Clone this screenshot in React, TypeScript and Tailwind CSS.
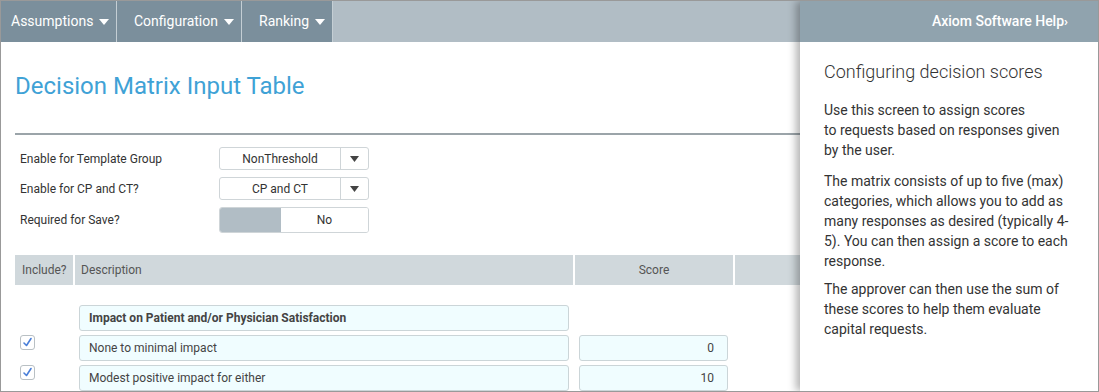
import React from 'react';

const navItems = [
  { label: 'Assumptions', cls: 'w-[116px] pl-[10px]' },
  { label: 'Configuration', cls: 'w-[125px] pl-[17px]' },
  { label: 'Ranking', cls: 'w-[91px] pl-[17px]' },
];

function Caret() {
  return (
    <svg width="10" height="6" viewBox="0 0 10 6" className="fill-white">
      <path d="M0 0 L10 0 L5 6 Z" />
    </svg>
  );
}

function SelectBox({ value }: { value: string }) {
  return (
    <div className="flex h-[23px] w-[150px] items-stretch rounded-[3px] border border-[#cfd5d8] bg-white text-[12px] text-[#333]">
      <div className="flex flex-1 items-center justify-center">{value}</div>
      <div className="flex w-[28px] items-center justify-center border-l border-[#cfd5d8]">
        <svg width="9" height="6" viewBox="0 0 9 6" className="fill-[#444]">
          <path d="M0 0 L9 0 L4.5 6 Z" />
        </svg>
      </div>
    </div>
  );
}

function Check() {
  return (
    <div className="flex h-[15px] w-[15px] items-center justify-center rounded-[3px] border border-[#b9c0c4] bg-white">
      <svg width="11" height="11" viewBox="0 0 11 11" fill="none">
        <path d="M2 6 L4.5 8.5 L9 1.5" stroke="#4a7fd8" strokeWidth="1.6" strokeLinecap="round" strokeLinejoin="round" />
      </svg>
    </div>
  );
}

const rows = [
  { desc: 'None to minimal impact', score: '0' },
  { desc: 'Modest positive impact for either', score: '10' },
];

export default function App() {
  return (
    <div className="relative box-border h-[392px] w-[1099px] overflow-hidden border border-[#999] bg-white font-['Roboto',sans-serif] text-[#333]">
      {/* Top nav */}
      <div className="flex h-[41px] bg-[#b1bdc5]">
        {navItems.map((n) => (
          <div
            key={n.label}
            className={`flex items-center gap-[6px] border-r border-[#c4ced4] bg-[#7b8f9c] text-[14px] text-white ${n.cls}`}
          >
            {n.label}
            <Caret />
          </div>
        ))}
      </div>

      {/* Main */}
      <div className="pl-[14px]">
        <div className="flex h-[93px] items-center border-b-2 border-[#9ba4a9]">
          <h1 className="-mt-[4px] text-[24px] font-normal text-[#3fa2d6]">Decision Matrix Input Table</h1>
          <div className="ml-auto flex items-center gap-[13px] pt-[2px]">
            <span className="text-[14px] text-[#444]">View</span>
            <div className="flex h-[29px] w-[200px] items-center rounded-[3px] border border-[#ccc] px-[12px] text-[14px] text-[#222]">
              All
            </div>
          </div>
        </div>

        <div className="flex flex-col gap-[7px] pt-[12px] pl-[4px] text-[12px]">
          <div className="flex items-center">
            <span className="w-[200px] pl-[1px]">Enable for Template Group</span>
            <SelectBox value="NonThreshold" />
          </div>
          <div className="flex items-center">
            <span className="w-[200px] pl-[1px]">Enable for CP and CT?</span>
            <SelectBox value="CP and CT" />
          </div>
          <div className="flex items-center">
            <span className="w-[200px] pl-[1px]">Required for Save?</span>
            <div className="flex h-[26px] w-[150px] overflow-hidden rounded-[3px] border border-[#cfd5d8]">
              <div className="w-[61px] bg-[#b1bdc5]" />
              <div className="flex flex-1 items-center justify-center bg-white">No</div>
            </div>
          </div>
        </div>

        {/* Table header */}
        <div className="mt-[22px] flex h-[30px] gap-[2px] text-[12px] text-[#555]">
          <div className="flex w-[58px] items-center bg-[#d0d8dc] pl-[7px]">Include?</div>
          <div className="flex w-[498px] items-center bg-[#d0d8dc] pl-[6px]">Description</div>
          <div className="flex w-[158px] items-center justify-center bg-[#d0d8dc]">Score</div>
          <div className="flex-1 bg-[#d0d8dc]" />
        </div>

        {/* Rows */}
        <div className="mt-[20px] flex flex-col gap-[4px] text-[12px]">
          <div className="flex">
            <div className="w-[64px]" />
            <div className="flex h-[26px] w-[490px] items-center rounded-[3px] border border-[#cbd5d8] bg-[#f0fdff] pl-[9px] font-bold text-[#444]">
              Impact on Patient and/or Physician Satisfaction
            </div>
          </div>
          {rows.map((r) => (
            <div key={r.desc} className="flex items-start">
              <div className="w-[64px] pl-[5px]">
                <Check />
              </div>
              <div className="flex h-[26px] w-[490px] items-center rounded-[3px] border border-[#cbd5d8] bg-[#f0fdff] pl-[9px] text-[#444]">
                {r.desc}
              </div>
              <div className="ml-[10px] flex h-[26px] w-[149px] items-center justify-end rounded-[3px] border border-[#cbd5d8] bg-[#f0fdff] pr-[13px] text-[#444]">
                {r.score}
              </div>
            </div>
          ))}
        </div>
      </div>

      {/* Help panel */}
      <div className="absolute top-0 right-0 bottom-0 w-[298px] bg-white shadow-[-4px_0_8px_rgba(0,0,0,0.3)]">
        <div className="flex h-[41px] items-center justify-end bg-[#90a3ae] pr-[30px] text-[14px] font-medium text-white">
          Axiom Software Help<span className="text-[13px] font-bold">›</span>
        </div>
        <div className="px-[24px] pt-[18px] text-[14px] leading-[20px] text-[#333]">
          <h2 className="text-[18px] font-light leading-[24px] text-[#333]">Configuring decision scores</h2>
          <p className="mt-[16px]">
            Use this screen to assign scores
            <br />
            to requests based on responses given by the user.
          </p>
          <p className="mt-[11px]">
            The matrix consists of up to five (max) categories, which allows you to add as many responses as desired (typically 4-5). You can then assign a score to each response.
          </p>
          <p className="mt-[8px]">
            The approver can then use the sum of these scores to help them evaluate capital requests.
          </p>
        </div>
      </div>
    </div>
  );
}
